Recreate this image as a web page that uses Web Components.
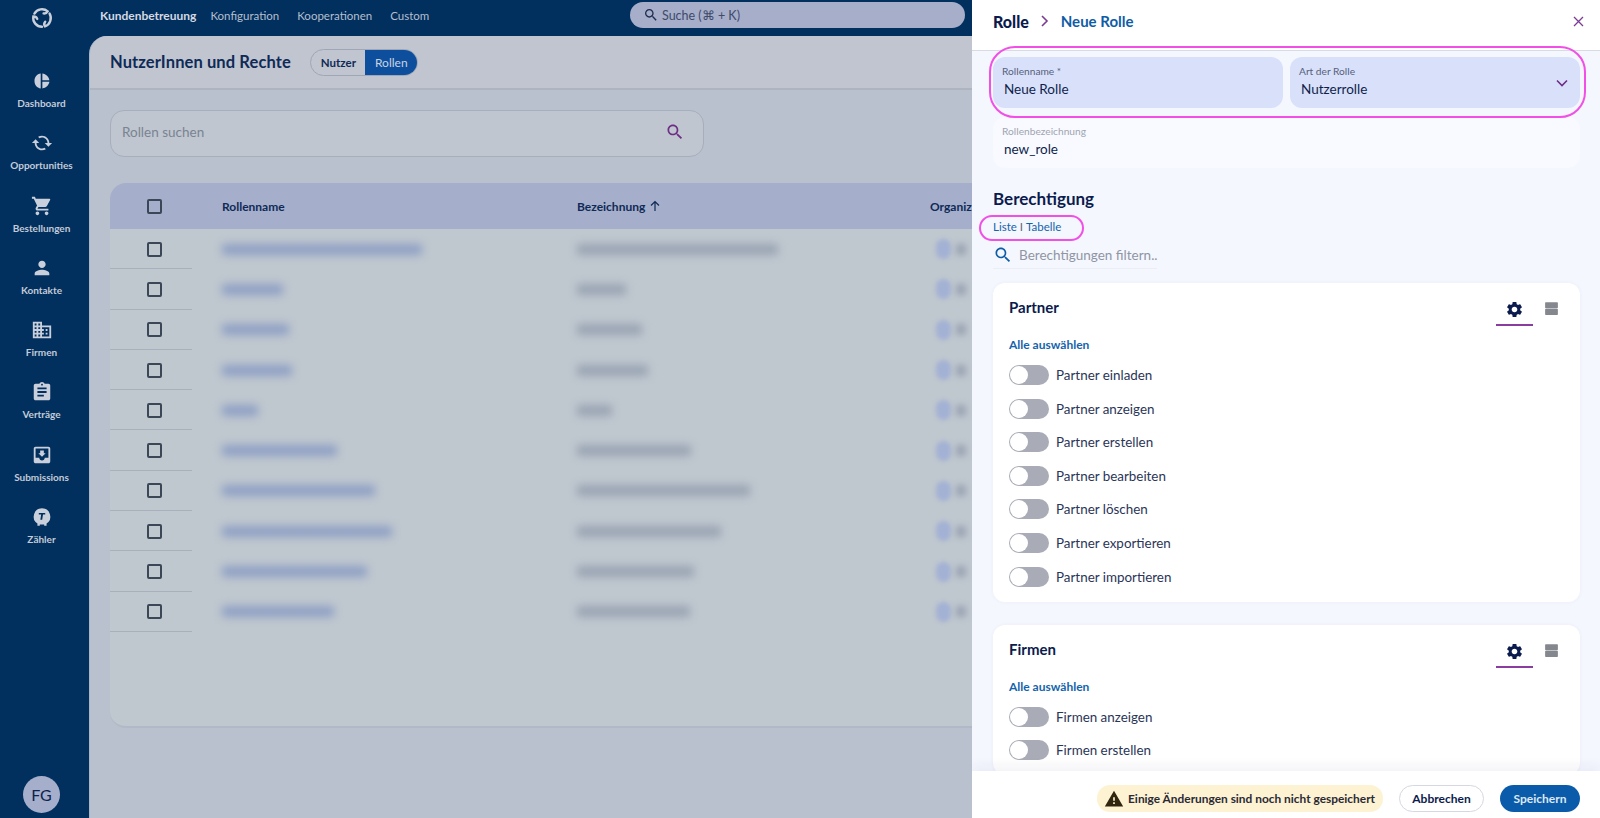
<!DOCTYPE html>
<html lang="de">
<head>
<meta charset="utf-8">
<title>NutzerInnen und Rechte</title>
<style>
  html, body { margin: 0; height: 100%; overflow: hidden; }
  body { font-family: "Lato", "Liberation Sans", sans-serif; color: #0b1b4d; }
</style>
</head>
<body>
<app-shell>
  <app-sidebar slot="sidebar">
    <nav-item label="Dashboard" icon="dashboard"></nav-item>
    <nav-item label="Opportunities" icon="sync"></nav-item>
    <nav-item label="Bestellungen" icon="cart"></nav-item>
    <nav-item label="Kontakte" icon="person"></nav-item>
    <nav-item label="Firmen" icon="domain"></nav-item>
    <nav-item label="Verträge" icon="assignment"></nav-item>
    <nav-item label="Submissions" icon="inbox"></nav-item>
    <nav-item label="Zähler" icon="meter"></nav-item>
  </app-sidebar>
  <app-topbar slot="topbar"></app-topbar>
  <roles-page slot="page"></roles-page>
  <role-panel slot="panel">
    <perm-card title="Partner" items="Partner einladen|Partner anzeigen|Partner erstellen|Partner bearbeiten|Partner löschen|Partner exportieren|Partner importieren"></perm-card>
    <perm-card title="Firmen" items="Firmen anzeigen|Firmen erstellen"></perm-card>
  </role-panel>
</app-shell>

<script>
const ICONS = {
  // cached, flipped vertically in icon() so the arrow heads sit like the reference
  sync: 'M19 8l-4 4h3c0 3.31-2.69 6-6 6-1.01 0-1.97-.25-2.8-.7l-1.46 1.46C8.97 19.54 10.43 20 12 20c4.42 0 8-3.58 8-8h3l-4-4zM6 12c0-3.31 2.69-6 6-6 1.01 0 1.97.25 2.8.7l1.46-1.46C15.03 4.46 13.57 4 12 4c-4.42 0-8 3.58-8 8H1l4 4 4-4H6z',
  cart: 'M7 18c-1.1 0-1.99.9-1.99 2S5.9 22 7 22s2-.9 2-2-.9-2-2-2zM1 2v2h2l3.6 7.59-1.35 2.45c-.16.28-.25.61-.25.96 0 1.1.9 2 2 2h12v-2H7.42c-.14 0-.25-.11-.25-.25l.03-.12.9-1.63h7.45c.75 0 1.41-.41 1.75-1.03l3.58-6.49c.08-.14.12-.31.12-.48 0-.55-.45-1-1-1H5.21l-.94-2H1zm16 16c-1.1 0-1.99.9-1.99 2s.89 2 1.99 2 2-.9 2-2-.9-2-2-2z',
  person: 'M12 12c2.21 0 4-1.79 4-4s-1.79-4-4-4-4 1.79-4 4 1.79 4 4 4zm0 2c-2.67 0-8 1.34-8 4v2h16v-2c0-2.66-5.33-4-8-4z',
  domain: 'M12 7V3H2v18h20V7H12zM6 19H4v-2h2v2zm0-4H4v-2h2v2zm0-4H4V9h2v2zm0-4H4V5h2v2zm4 12H8v-2h2v2zm0-4H8v-2h2v2zm0-4H8V9h2v2zm0-4H8V5h2v2zm10 12h-8v-2h2v-2h-2v-2h2v-2h-2V9h8v10zm-2-8h-2v2h2v-2zm0 4h-2v2h2v-2z',
  assignment: 'M19 3h-4.18C14.4 1.84 13.3 1 12 1c-1.3 0-2.4.84-2.82 2H5c-1.1 0-2 .9-2 2v14c0 1.1.9 2 2 2h14c1.1 0 2-.9 2-2V5c0-1.1-.9-2-2-2zm-7 0c.55 0 1 .45 1 1s-.45 1-1 1-1-.45-1-1 .45-1 1-1zm2 14H7v-2h7v2zm3-4H7v-2h10v2zm0-4H7V7h10v2z',
  inbox: 'M19 3H5c-1.1 0-2 .9-2 2v14c0 1.1.9 2 2 2h14c1.1 0 2-.9 2-2V5c0-1.1-.9-2-2-2zm0 12h-4c0 1.66-1.35 3-3 3s-3-1.34-3-3H5V5h14v10zm-3-5h-2V7h-4v3H8l4 4 4-4z',
  dashboard: 'M10.6 3.9v16.2C6.5 19.6 3.8 16.2 3.8 12s2.7-7.6 6.8-8.1zM12.4 3.9c3.9.4 7.2 3.6 7.7 7.2h-7.7V3.9zM12.4 12.9h7.7c-.5 3.6-3.8 6.8-7.7 7.2v-7.2z',
  meter: 'M12 2.5a9 9 0 0 0-5 16.5v2.5h2.6v-1.3h4.8v1.3H17V19A9 9 0 0 0 12 2.5zM8.5 7.5h7v1.8h-2.4l-.9 5.8h-2l.9-5.8H8.5V7.5z',
  search: 'M15.5 14h-.79l-.28-.27C15.41 12.59 16 11.11 16 9.5 16 5.91 13.09 3 9.5 3S3 5.91 3 9.5 5.91 16 9.5 16c1.61 0 3.09-.59 4.23-1.57l.27.28v.79l5 4.99L20.49 19l-4.99-5zm-6 0C7.01 14 5 11.99 5 9.5S7.01 5 9.5 5 14 7.01 14 9.5 11.99 14 9.5 14z',
  settings: 'M19.14 12.94c.04-.3.06-.61.06-.94 0-.32-.02-.64-.07-.94l2.03-1.58c.18-.14.23-.41.12-.61l-1.92-3.32c-.12-.22-.37-.29-.59-.22l-2.39.96c-.5-.38-1.03-.7-1.62-.94l-.36-2.54c-.04-.24-.24-.41-.48-.41h-3.84c-.24 0-.43.17-.47.41l-.36 2.54c-.59.24-1.13.57-1.62.94l-2.39-.96c-.22-.08-.47 0-.59.22L2.74 8.87c-.12.21-.08.47.12.61l2.03 1.58c-.05.3-.09.63-.09.94s.02.64.07.94l-2.03 1.58c-.18.14-.23.41-.12.61l1.92 3.32c.12.22.37.29.59.22l2.39-.96c.5.38 1.03.7 1.62.94l.36 2.54c.05.24.24.41.48.41h3.84c.24 0 .44-.17.47-.41l.36-2.54c.59-.24 1.13-.56 1.62-.94l2.39.96c.22.08.47 0 .59-.22l1.92-3.32c.12-.22.07-.47-.12-.61l-2.01-1.58zM12 15.6c-1.98 0-3.6-1.62-3.6-3.6s1.62-3.6 3.6-3.6 3.6 1.62 3.6 3.6-1.62 3.6-3.6 3.6z',
  agenda: 'M4 3h16a1 1 0 0 1 1 1v6.5a1 1 0 0 1-1 1H4a1 1 0 0 1-1-1V4a1 1 0 0 1 1-1zM4 12.5h16a1 1 0 0 1 1 1V20a1 1 0 0 1-1 1H4a1 1 0 0 1-1-1v-6.5a1 1 0 0 1 1-1z',
  warning: 'M1 21h22L12 2 1 21zm12-3h-2v-2h2v2zm0-4h-2v-4h2v4z'
};

function icon(name, size, color) {
  const flip = name === 'sync' ? ' transform="matrix(1 0 0 -1 0 24)"' : '';
  return `<svg width="${size}" height="${size}" viewBox="0 0 24 24" fill="${color}" style="display:block;flex:none"><path${flip} d="${ICONS[name]}"/></svg>`;
}

class AppShell extends HTMLElement {
  constructor() {
    super();
    this.attachShadow({ mode: 'open' });
    this.shadowRoot.innerHTML = `
      <style>
        :host { display: flex; width: 1600px; height: 818px; overflow: hidden; background: #b9c0ce; }
        .side { flex: none; width: 89px; display: flex; }
        .main { flex: none; width: 883px; display: flex; flex-direction: column; min-width: 0; overflow: hidden; background: #012f5e; box-sizing: border-box; }
        .panel { flex: none; width: 628px; display: flex; }
      </style>
      <div class="side"><slot name="sidebar"></slot></div>
      <div class="main"><slot name="topbar"></slot><slot name="page"></slot></div>
      <div class="panel"><slot name="panel"></slot></div>
    `;
  }
}

class AppSidebar extends HTMLElement {
  constructor() {
    super();
    this.attachShadow({ mode: 'open' });
    const arc = 'M4.4 7.6 A8.8 8.8 0 0 1 17.7 5.3 Q16.4 7.9 13.6 7.4';
    this.shadowRoot.innerHTML = `
      <style>
        :host { display: flex; flex-direction: column; align-items: center; width: 89px; height: 818px; background: #012f5e; box-sizing: border-box; padding-right: 6px; }
        .logo { height: 36px; display: flex; align-items: center; justify-content: center; margin-bottom: 34px; }
        .items { display: flex; flex-direction: column; gap: 23.25px; flex: 1; width: 100%; }
        .avatar { width: 37px; height: 37px; border-radius: 50%; background: #a5aeca; color: #0c2350; font-size: 16px; display: flex; align-items: center; justify-content: center; margin-bottom: 5px; }
      </style>
      <div class="logo">
        <svg width="24" height="24" viewBox="0 0 24 24" fill="none" stroke="#c9d0dc" stroke-width="2.4" stroke-linecap="round">
          <path d="${arc}"/>
          <path transform="rotate(120 12 12)" d="${arc}"/>
          <path transform="rotate(240 12 12)" d="${arc}"/>
        </svg>
      </div>
      <div class="items"><slot></slot></div>
      <div class="avatar">FG</div>
    `;
  }
}

class NavItem extends HTMLElement {
  constructor() {
    super();
    this.attachShadow({ mode: 'open' });
    this.shadowRoot.innerHTML = `
      <style>
        :host { display: flex; flex-direction: column; align-items: center; height: 39px; gap: 5px; }
        span { font-size: 10px; line-height: 13px; color: #c3cbd8; font-weight: 700; white-space: nowrap; }
      </style>
      ${icon(this.getAttribute('icon'), 22, '#c9d0dc')}
      <span>${this.getAttribute('label')}</span>
    `;
  }
}

class AppTopbar extends HTMLElement {
  constructor() {
    super();
    this.attachShadow({ mode: 'open' });
    this.shadowRoot.innerHTML = `
      <style>
        :host { display: flex; align-items: flex-start; flex: none; height: 36px; background: #012f5e; padding: 2px 7px 0 11px; box-sizing: border-box; }
        nav { display: flex; gap: 14px; font-size: 11.5px; color: #b5bfce; height: 27px; align-items: center; }
        nav b { color: #d4d9e2; font-weight: 700; font-size: 12px; }
        nav a:nth-child(3) { margin-left: 4px; }
        nav a:nth-child(4) { margin-left: 4px; }
        .search { margin-left: auto; width: 335px; height: 26px; border-radius: 13px; background: #a6aeca; display: flex; align-items: center; gap: 3px; padding-left: 13px; box-sizing: border-box; font-size: 12.5px; color: #3e4b6a; }
      </style>
      <nav><b>Kundenbetreuung</b><a>Konfiguration</a><a>Kooperationen</a><a>Custom</a></nav>
      <div class="search">${icon('search', 16, '#1e2d4f')}<span>Suche (⌘ + K)</span></div>
    `;
  }
}

class RolesPage extends HTMLElement {
  constructor() {
    super();
    this.attachShadow({ mode: 'open' });
    const rows = [
      [200, 201], [61, 49], [67, 65], [70, 71], [36, 35],
      [115, 114], [153, 173], [170, 144], [145, 117], [112, 113]
    ];
    this.shadowRoot.innerHTML = `
      <style>
        :host { display: flex; flex-direction: column; flex: 1; min-height: 0; background: #b9c0ce; border-top-left-radius: 18px; border-left: 1px solid #aab5c9; }
        .head { display: flex; align-items: center; flex: none; height: 54px; padding-left: 20px; gap: 19px; box-sizing: border-box; background: #c0c5cf; border-bottom: 2px solid #aeb4c0; border-top-left-radius: 18px; }
        h1 { margin: 0; font-size: 16.5px; font-weight: 700; color: #0f2a57; letter-spacing: .1px; }
        .seg { display: flex; height: 27px; border: 1px solid #9fa7b6; border-radius: 14px; overflow: hidden; font-size: 12px; box-sizing: border-box; }
        .seg span { display: flex; align-items: center; padding: 0 9px 0 10px; color: #0f2a57; font-weight: 700; font-size: 11.5px; }
        .seg .on { background: #0d4f9c; color: #c9d3e3; padding: 0 9px 0 10px; font-weight: 400; font-size: 12px; }
        .find { flex: none; margin: 20px 0 0 20px; width: 594px; height: 47px; box-sizing: border-box; border: 1px solid #a8aebc; border-radius: 14px; background: #bfc6cf; display: flex; align-items: center; justify-content: space-between; padding: 0 18px 3px 11px; font-size: 13.5px; color: #7a8392; }
        .table { flex: none; margin: 26px 0 0 20px; width: 1000px; height: 545px; border-radius: 16px 0 0 16px; background: #bfc7cf; overflow: hidden; border-bottom: 2px solid #b1b8c7; box-sizing: border-box; }
        .row { display: flex; align-items: center; height: 40.3px; box-sizing: border-box; position: relative; }
        .row.th { height: 46px; background: #a5aeca; font-size: 12px; font-weight: 700; color: #0f2a57; }
        .c0 { width: 112px; flex: none; display: flex; justify-content: center; box-sizing: border-box; padding-right: 24px; }
        .box { width: 15px; height: 15px; border: 2px solid #3b4656; border-radius: 2px; box-sizing: border-box; }
        .c1 { width: 355px; flex: none; }
        .c2 { width: 353px; flex: none; display: flex; align-items: center; gap: 4px; }
        .row:not(.th)::after { content: ""; position: absolute; left: 0; bottom: 0; width: 82px; height: 1px; background: #a9b0bc; }
        .bar { height: 11px; border-radius: 3px; filter: blur(4px); }
        .c1 .bar { background: #8fa0c4; }
        .c2 .bar { background: #99a4b3; }
        .org { display: flex; align-items: center; gap: 5px; margin-left: 6px; }
        .org i { width: 15px; height: 20px; border-radius: 8px; background: #a3b1d4; filter: blur(2px); }
        .org u { width: 10px; height: 11px; background: #9aa5b4; filter: blur(3px); }
      </style>
      <div class="head">
        <h1>NutzerInnen und Rechte</h1>
        <div class="seg"><span>Nutzer</span><span class="on">Rollen</span></div>
      </div>
      <div class="find"><span>Rollen suchen</span>${icon('search', 20, '#6f2d86')}</div>
      <div class="table">
        <div class="row th">
          <div class="c0"><div class="box"></div></div>
          <div class="c1">Rollenname</div>
          <div class="c2">Bezeichnung
            <svg width="12" height="12" viewBox="0 0 12 12" fill="none" stroke="#0f2a57" stroke-width="1.2"><path d="M6 11V1.5M2 5.5l4-4 4 4"/></svg>
          </div>
          <div>Organization</div>
        </div>
        ${rows.map(r => `
          <div class="row">
            <div class="c0"><div class="box"></div></div>
            <div class="c1"><div class="bar" style="width:${r[0]}px"></div></div>
            <div class="c2"><div class="bar" style="width:${r[1]}px"></div></div>
            <div class="org"><i></i><u></u></div>
          </div>`).join('')}
      </div>
    `;
  }
}

class FormField extends HTMLElement {
  constructor() {
    super();
    this.attachShadow({ mode: 'open' });
    const chevron = this.hasAttribute('select')
      ? `<svg class="chev" width="12" height="8" viewBox="0 0 12 8" fill="none" stroke="#6f2d86" stroke-width="1.6"><path d="M1 1.5l5 5 5-5"/></svg>` : '';
    this.shadowRoot.innerHTML = `
      <style>
        :host { display: block; flex: 1; height: 51px; position: relative; border-radius: 12px; background: var(--field-bg, #d9e0fa); box-sizing: border-box; padding: 8px 0 0 9px; }
        label { display: block; font-size: 10.2px; line-height: 12px; color: var(--label-color, #55607c); }
        div { font-size: 13.5px; line-height: 18px; margin: 3px 0 0 2px; color: #0f1f4c; }
        .chev { position: absolute; right: 12px; top: 22px; }
      </style>
      <label>${this.getAttribute('label')}</label>
      <div>${this.getAttribute('value')}</div>
      ${chevron}
    `;
  }
}

class PermCard extends HTMLElement {
  constructor() {
    super();
    this.attachShadow({ mode: 'open' });
    const items = this.getAttribute('items').split('|');
    this.shadowRoot.innerHTML = `
      <style>
        :host { display: block; flex: none; background: #fff; border-radius: 12px; padding: 15px 16px 15px; box-shadow: 0 0 4px rgba(40,60,120,.05); }
        .top { display: flex; justify-content: space-between; align-items: flex-start; height: 37px; }
        h3 { margin: 0; font-size: 15px; line-height: 18px; font-weight: 700; color: #0b1b4d; }
        .tabs { display: flex; align-items: flex-start; gap: 9px; margin-right: 4px; }
        .tab { width: 37px; height: 24px; display: flex; justify-content: center; padding-top: 2px; box-sizing: content-box; }
        .tab.on { border-bottom: 2px solid #8a3d9f; }
        .all { font-size: 12px; line-height: 14px; font-weight: 700; color: #1464ac; margin-top: 3px; }
        ul { list-style: none; margin: 13px 0 0; padding: 0; display: flex; flex-direction: column; gap: 13.6px; }
        li { display: flex; align-items: center; gap: 7px; font-size: 13.4px; line-height: 20px; color: #2b3557; }
        .sw { width: 40px; height: 20px; border-radius: 10px; background: #a9acb6; position: relative; flex: none; }
        .sw::after { content: ""; position: absolute; left: 1px; top: 1px; width: 18px; height: 18px; border-radius: 50%; background: #fff; }
      </style>
      <div class="top">
        <h3>${this.getAttribute('title')}</h3>
        <div class="tabs">
          <div class="tab on">${icon('settings', 19, '#0b1b4d')}</div>
          <div class="tab" style="width:18px">${icon('agenda', 17, '#85878f')}</div>
        </div>
      </div>
      <div class="all">Alle auswählen</div>
      <ul>${items.map(t => `<li><span class="sw"></span>${t}</li>`).join('')}</ul>
    `;
  }
}

class RolePanel extends HTMLElement {
  constructor() {
    super();
    this.attachShadow({ mode: 'open' });
    this.shadowRoot.innerHTML = `
      <style>
        :host { display: flex; flex-direction: column; width: 628px; height: 818px; background: #f5f7ff; position: relative; overflow: hidden; box-sizing: border-box; }
        header { flex: none; height: 51px; background: #fff; border-bottom: 1px solid #d8dbe4; box-sizing: border-box; display: flex; align-items: center; padding: 0 16px 8px 21px; font-size: 15px; font-weight: 700; }
        header b { color: #0b1b4d; font-size: 16px; }
        header em { font-style: normal; color: #0f5ca6; margin-left: 11px; }
        header svg.sep { margin-left: 11px; }
        header svg.x { margin-left: auto; }
        .body { flex: 1; min-height: 0; overflow: hidden; padding: 6px 20px 0 21px; display: flex; flex-direction: column; }
        .pair { display: flex; gap: 7px; flex: none; }
        .name { flex: none; margin-top: 9px; --field-bg: #f8faff; --label-color: #a0a4b0; }
        h2 { margin: 20px 0 0; font-size: 17px; line-height: 22px; font-weight: 700; color: #0b1b4d; flex: none; }
        .links { flex: none; margin-top: 9px; font-size: 11.5px; line-height: 15px; color: #1464ac; }
        .links i { font-style: normal; color: #5d6577; margin: 0 3px; }
        .filter { flex: none; width: 164px; height: 26px; margin-top: 8px; display: flex; align-items: center; gap: 6px; font-size: 13.5px; color: #8f95a3; border-bottom: 1px solid #eceef6; white-space: nowrap; }
        .cards { flex: none; display: flex; flex-direction: column; gap: 23px; margin-top: 14px; }
        footer { flex: none; height: 47px; background: #fff; display: flex; align-items: center; justify-content: flex-end; padding: 8px 20px 0; box-sizing: border-box; gap: 16px; font-size: 12px; font-weight: 700; position: relative; box-shadow: 0 -6px 10px rgba(30,40,90,.05); }
        .warn { display: flex; align-items: center; gap: 4px; height: 27px; padding: 0 8px 0 7px; border-radius: 13px; background: #fdf3d3; color: #2a2a35; font-size: 11.9px; }
        .btn { display: flex; align-items: center; justify-content: center; height: 27px; border-radius: 14px; box-sizing: border-box; }
        .ghost { width: 85px; border: 1px solid #d5d8e0; color: #0b1b4d; }
        .primary { width: 80px; background: #0a5cab; color: #dfe8f3; }
        .mark { position: absolute; border: 2.5px solid #f14fe6; box-sizing: border-box; pointer-events: none; }
        .m1 { left: 17px; top: 46px; width: 597px; height: 72px; border-radius: 26px; }
        .m2 { left: 7px; top: 215px; width: 105px; height: 26px; border-radius: 13px; }
      </style>
      <header>
        <b>Rolle</b>
        <svg class="sep" width="10" height="12" viewBox="0 0 10 12" fill="none" stroke="#7b3a94" stroke-width="1.6"><path d="M2 1l5 5-5 5"/></svg>
        <em>Neue Rolle</em>
        <svg class="x" width="11" height="11" viewBox="0 0 11 11" fill="none" stroke="#7b3a94" stroke-width="1.3"><path d="M1 1l9 9M10 1l-9 9"/></svg>
      </header>
      <div class="body">
        <div class="pair">
          <form-field label="Rollenname *" value="Neue Rolle"></form-field>
          <form-field label="Art der Rolle" value="Nutzerrolle" select></form-field>
        </div>
        <form-field class="name" label="Rollenbezeichnung" value="new_role"></form-field>
        <h2>Berechtigung</h2>
        <div class="links">Liste<i>I</i>Tabelle</div>
        <div class="filter">${icon('search', 20, '#0f5ca6')}<span>Berechtigungen filtern..</span></div>
        <div class="cards"><slot></slot></div>
      </div>
      <footer>
        <div class="warn">${icon('warning', 20, '#30260f')}<span>Einige Änderungen sind noch nicht gespeichert</span></div>
        <div class="btn ghost">Abbrechen</div>
        <div class="btn primary">Speichern</div>
      </footer>
      <div class="mark m1"></div>
      <div class="mark m2"></div>
    `;
  }
}

customElements.define('app-shell', AppShell);
customElements.define('app-sidebar', AppSidebar);
customElements.define('nav-item', NavItem);
customElements.define('app-topbar', AppTopbar);
customElements.define('roles-page', RolesPage);
customElements.define('form-field', FormField);
customElements.define('perm-card', PermCard);
customElements.define('role-panel', RolePanel);
</script>
</body>
</html>
